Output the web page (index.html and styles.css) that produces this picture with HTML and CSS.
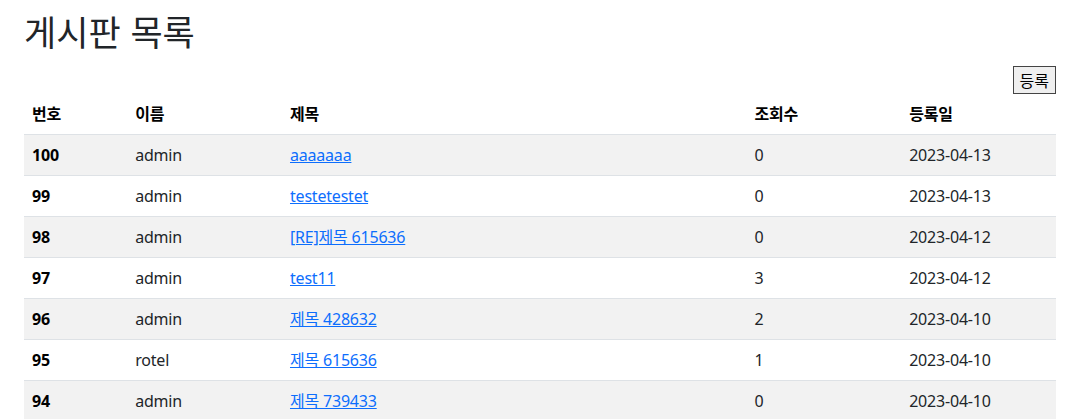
FILE: index.html
```html
<!DOCTYPE html>
<html lang="ko">
<head>
<meta charset="utf-8">
<title>게시판 목록</title>
<link rel="stylesheet" href="styles.css">
</head>
<body>
<div class="page">
  <h2 class="title">게시판 목록</h2>
  <div class="actions">
    <button class="btn" type="button">등록</button>
  </div>
  <table class="board">
    <colgroup>
      <col class="c-num"><col class="c-name"><col class="c-subject"><col class="c-views"><col class="c-date">
    </colgroup>
    <thead>
      <tr><th>번호</th><th>이름</th><th>제목</th><th>조회수</th><th>등록일</th></tr>
    </thead>
    <tbody>
      <tr><th>100</th><td>admin</td><td><a href="#">aaaaaaa</a></td><td>0</td><td>2023-04-13</td></tr>
      <tr><th>99</th><td>admin</td><td><a href="#">testetestet</a></td><td>0</td><td>2023-04-13</td></tr>
      <tr><th>98</th><td>admin</td><td><a href="#">[RE]제목 615636</a></td><td>0</td><td>2023-04-12</td></tr>
      <tr><th>97</th><td>admin</td><td><a href="#">test11</a></td><td>3</td><td>2023-04-12</td></tr>
      <tr><th>96</th><td>admin</td><td><a href="#">제목 428632</a></td><td>2</td><td>2023-04-10</td></tr>
      <tr><th>95</th><td>rotel</td><td><a href="#">제목 615636</a></td><td>1</td><td>2023-04-10</td></tr>
      <tr><th>94</th><td>admin</td><td><a href="#">제목 739433</a></td><td>0</td><td>2023-04-10</td></tr>
    </tbody>
  </table>
</div>
</body>
</html>
```
FILE: styles.css
```css
html, body {
  margin: 0;
  padding: 0;
  background: #fff;
}
body {
  font-family: "Noto Sans", "Noto Sans CJK KR", sans-serif;
  font-size: 16px;
  line-height: 24px;
  color: #212529;
}
.page {
  padding: 12px 15px 0 24px;
}
.title {
  margin: 0;
  font-family: "Noto Sans CJK KR", sans-serif;
  font-size: 35px;
  font-weight: 400;
  line-height: 38px;
}
.actions {
  display: flex;
  justify-content: flex-end;
  margin-top: 16px;
}
.btn {
  font-family: "Noto Sans CJK KR", sans-serif;
  font-size: 16px;
  line-height: 22px;
  height: 28px;
  padding: 0 6px;
  color: #000;
  background: #efefef;
  border: 1px solid #444;
  border-radius: 0;
}
.board {
  width: 100%;
  border-collapse: collapse;
  table-layout: fixed;
  letter-spacing: -0.2px;
}
.c-num { width: 10%; }
.c-name { width: 15%; }
.c-subject { width: 45%; }
.c-views { width: 15%; }
.c-date { width: 15%; }
.board th, .board td {
  padding: 8px;
  text-align: left;
  border-bottom: 1px solid #dee2e6;
  white-space: nowrap;
}
.board th {
  font-weight: 700;
  color: #000;
}
.board tbody tr:nth-child(odd) {
  background: #f2f2f2;
}
.board a {
  color: #0d6efd;
  text-decoration: underline;
}
```
